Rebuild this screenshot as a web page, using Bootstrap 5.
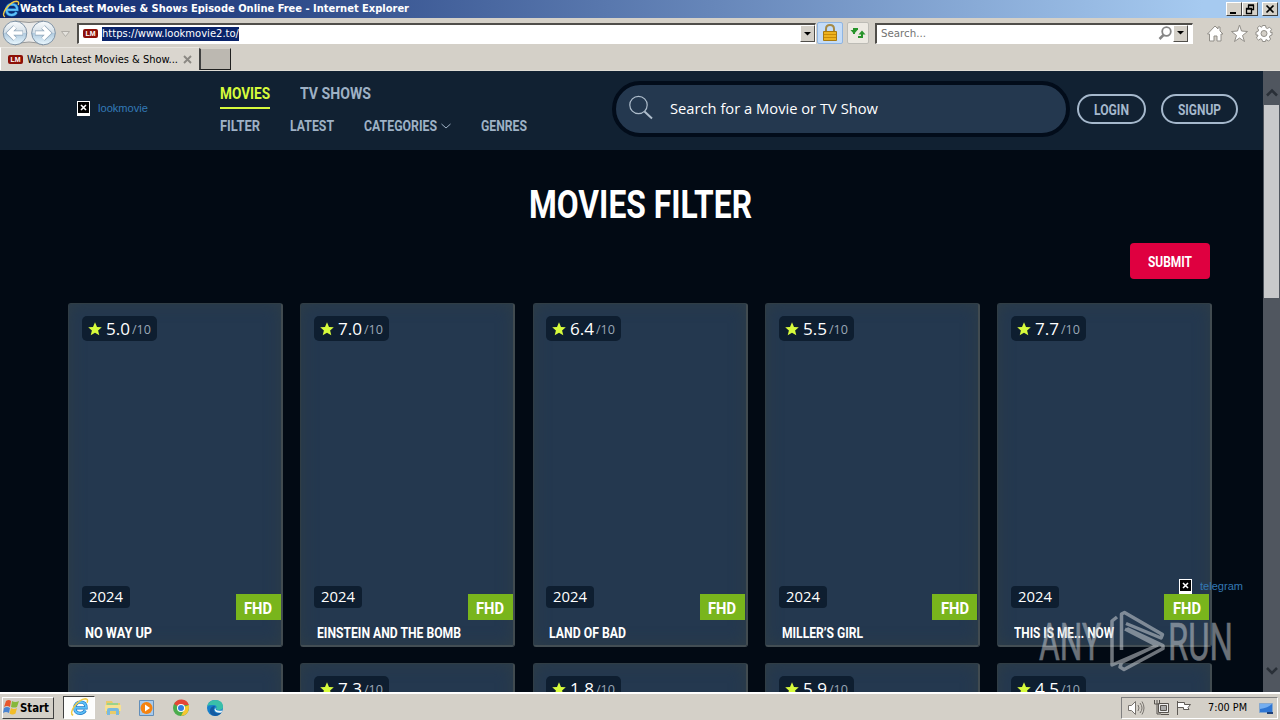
<!DOCTYPE html>
<html lang="en">
<head>
  <meta charset="UTF-8">
  <title>Watch Latest Movies &amp; Shows Episode Online Free</title>
  <link href="https://cdn.jsdelivr.net/npm/bootstrap@5.3.3/dist/css/bootstrap.min.css" rel="stylesheet">
  <style>
    body { width: 1280px; height: 720px; overflow: hidden; background: #d4d0c8; font-family: "DejaVu Sans Condensed", "DejaVu Sans", sans-serif; font-size: 11px; line-height: 14px; color: #000; }
    svg { display: block; flex: none; }
    [data-w] { display: inline-block; white-space: nowrap; flex: none; }
    [data-w] > span { display: inline-block; transform-origin: 0 50%; }

    /* window chrome */
    .titlebar { height: 18px; background: linear-gradient(90deg, #0a246a, #a6caf0 94%); color: #fff; font-weight: bold; padding: 0 2px 0 2px; }
    .win-btn { width: 16px; height: 14px; background: #d4d0c8; border: 1px solid; border-color: #fff #404040 #404040 #fff; }
    .toolbar { height: 29px; padding: 1px 4px 0 2px; }
    .sunken { height: 21px; background: #fff; border: solid; border-width: 2px 1px 1px 2px; border-color: #504e4a #fff #fff #504e4a; }
    .address { width: 739px; }
    .quick-search { width: 318px; margin-left: 6px; color: #737373; }
    .url-sel { background: #0a246a; color: #fff; height: 14px; line-height: 14px; }
    .drop-btn { width: 15px; height: 17px; background: #d4d0c8; border: 1px solid; border-color: #fff #504e4a #504e4a #fff; }
    .tool-btn { width: 22px; height: 22px; border: 1px solid #bdbcb6; border-radius: 2px; background: #ece9e2; margin-left: 4px; }
    .tool-btn.on { width: 26px; background: #c4dcf8; border-color: #8fb5e2; margin-left: 1px; }
    .tabs-row { height: 24px; border-bottom: 1px solid #dedbd4; }
    .ie-tab { width: 199px; height: 23px; background: #dad6cf; border-left: 1px solid #fff; border-top: 1px solid #e8e5df; padding: 1px 0 0 7px; }
    .new-tab { width: 32px; height: 22px; margin-top: 1px; background: #bcb8b1; border: 1px solid; border-width: 1px 1px 1px 2px; border-color: #d4d0c8 #202020 #202020 #404040; }
    .lm-icon { width: 15px; height: 9px; border-radius: 2px; background: #8d1008; color: #fff; font: bold 7px/9px "Liberation Sans", sans-serif; text-align: center; }

    /* page */
    .viewport { height: 621px; background: #020a14; overflow: hidden; }
    .page-body { width: 1263px; overflow: hidden; }
    .site-head { height: 79px; background: #112132; }
    .dosis { font-family: "Liberation Sans Narrow", "Roboto", sans-serif; font-weight: bold; }
    .nunito { font-family: "Open Sans", "Noto Sans", sans-serif; }
    .brand { width: 220px; padding: 0 0 4px 77px; font-family: "Liberation Sans", sans-serif; color: #337ab7; }
    .menu-area { width: 392px; padding-top: 10px; color: #9eb1c5; }
    .menu-main { height: 28px; font-size: 17px; line-height: 24px; }
    .menu-main .current { color: #d7fb3c; border-bottom: 2px solid #d7fb3c; height: 28px; }
    .menu-sub { font-size: 15px; line-height: 20px; margin-top: 7px; }
    .next-item { margin-left: 30px; }
    .site-search { width: 458px; height: 56px; margin-top: 10px; border: 4px solid #020c1a; border-radius: 28px; background: #24384f; color: #fff; font-size: 15px; padding: 0 0 2px 13px; }
    .account { margin: 23px 0 0 7px; gap: 15px; }
    .pill { height: 30px; border: 2px solid #a5b8cc; border-radius: 15px; color: #a5b8cc; font-size: 14px; padding: 2px 15px 0; }
    .page-title { height: 92px; padding: 32px 0 0 529px; color: #fff; font-size: 38px; line-height: 46px; }
    .submit-btn { width: 80px; height: 36px; background: #df0040; color: #fff; border-radius: 4px; font-size: 14px; margin: 1px 53px 0 0; padding-top: 1px; }
    .movies { display: grid; grid-template-columns: repeat(5, 215px); gap: 16px 17.2px; padding: 24px 0 0 68.2px; width: 1263px; }
    .movie { height: 344px; background: #24384f; border: 1px solid #303d45; border-right: 2px solid #414b50; border-bottom: 2px solid #434e54; border-radius: 3px; box-shadow: inset 0 0 16px #2e3d46; color: #fff; padding: 12px 0 0 12.8px; }
    .rate { width: 75px; height: 25px; border-radius: 5px; background: #0e1e30; padding-left: 6px; }
    .rate-num { font-size: 16px; font-weight: 500; }
    .rate-max { font-size: 12px; color: #9ba8b6; margin: 3px 0 0 2px; }
    .year { width: 48px; height: 22px; border-radius: 4px; background: #0e1e30; font-size: 14px; }
    .year-row { margin-top: 245px; height: 34px; }
    .fhd { width: 45px; height: 26px; background: #79b51c; font-size: 17px; align-self: flex-end; margin-right: .7px; padding-top: 1px; }
    .movie-name { font-size: 14px; line-height: 18px; padding: 3.5px 0 0 3px; }
    .scroll-track { width: 17px; background: #50565f; padding: 0 1px; }
    .scroll-thumb { height: 193px; background: #c8c9cb; }
    .x-box { width: 13px; height: 15px; background: #000; border: 1px solid #fff; }
    .after-x { margin-left: 8px; }
    .telegram { left: 1179px; top: 579px; color: #3378b4; font-family: "Liberation Sans", sans-serif; }
    .telegram .after-x, .brand .after-x { margin-top: -2px; }
    .watermark { left: 1036px; top: 606px; }

    /* taskbar */
    .taskbar { height: 28px; background: #d4d0c8; border-top: 2px solid #fff; padding: 1px 2px 0 2px; }
    .start-btn { width: 52px; height: 22px; border: 1px solid; border-color: #fff #404040 #404040 #fff; font-weight: bold; font-size: 12px; }
    .task-on { width: 32px; height: 23px; background: #fdfdfc; border: 1px solid; border-color: #404040 #fff #fff #404040; margin-left: 9px; }
    .launchers { gap: 16px; margin-left: 9px; }
    .tray { width: 157px; height: 22px; border: 1px solid; border-color: #808080 #fff #fff #808080; padding-left: 5px; }
    .clock { margin: 0 11px 0 15px; }
  </style>
  <script src="https://cdn.jsdelivr.net/npm/bootstrap@5.3.3/dist/js/bootstrap.bundle.min.js"></script>
</head>
<body>
  <svg width="0" height="0" class="position-absolute">
    <symbol id="ie" viewBox="0 0 18 18">
      <path d="M4.500 9.800h10.700Q15.200 4.300 10 4.300 5 4.500 4.500 9.800 4.500 15 9.700 15 12.800 15 14.500 12.200" fill="none" stroke="#1b78c8" stroke-width="3"/>
      <path d="M4.500 9.800h10.700Q15.200 4.300 10 4.300 5 4.500 4.500 9.800 4.500 15 9.700 15 12.800 15 14.500 12.200" fill="none" stroke="#5fc0f6" stroke-width="1.800"/>
      <path d="M3 16.800Q-.5 15.500 4 8.500 9.500 1.500 14.500 1.200 17.600 1.300 16.200 5" fill="none" stroke="#f0c943" stroke-width="1.400"/>
    </symbol>
    <symbol id="xmark" viewBox="0 0 11 13"><path d="M0 0h11v11H0z" fill="#000"/><path d="M0 11h11v2H0z" fill="#fff"/><path d="M3 3l5 5M8 3L3 8" stroke="#fff" stroke-width="1.600"/></symbol>
    <symbol id="star" viewBox="0 0 14 14"><path d="M7 .3L9 5l4.800.3-3.700 3.200L11.300 13.300 7 10.700 2.700 13.300 3.900 8.500.2 5.300 5 5z"/></symbol>
  </svg>

  <div class="titlebar d-flex align-items-center">
    <svg width="18" height="18"><use href="#ie"/></svg>
    <span data-w="389">Watch Latest Movies &amp; Shows Episode Online Free - Internet Explorer</span>
    <div class="d-flex ms-auto">
      <div class="win-btn"><svg width="14" height="12"><path d="M3 9h6v2H3z"/></svg></div>
      <div class="win-btn"><svg width="14" height="12"><path d="M5.500 5V2.500h5v4H8M5 2h6M3.500 5.500h5v5h-5zM3 6h6" fill="none" stroke="#000" stroke-width="1.300"/></svg></div>
      <div class="win-btn ms-1"><svg width="14" height="12"><path d="M3.500 2.500l7 7M10.500 2.500l-7 7" stroke="#000" stroke-width="1.700"/></svg></div>
    </div>
  </div>

  <div class="toolbar d-flex align-items-center">
    <svg width="75" height="28" viewBox="0 0 75 28">
      <defs><linearGradient id="orb" x2="0" y2="1"><stop stop-color="#fafcfd"/><stop offset=".48" stop-color="#d4dfe8"/><stop offset=".52" stop-color="#b1cbdf"/><stop offset="1" stop-color="#eaf8ff"/></linearGradient></defs>
      <path d="M13 2Q27 5 41 2V26Q27 20 13 26z" fill="#e9e9e8" stroke="#999"/>
      <circle cx="13" cy="14" r="11.800" fill="url(#orb)" stroke="#7f93a6"/><circle cx="41.500" cy="14" r="11.800" fill="url(#orb)" stroke="#7f93a6"/>
      <g fill="none" stroke="#8fa5b9" stroke-width="5"><path d="M21 14H7M13 8l-6 6 6 6M33 14h14M41 8l6 6-6 6"/></g>
      <g fill="none" stroke="#fff" stroke-width="3.600"><path d="M20.500 14H7M13 8l-6 6 6 6M33.500 14h14M41 8l6 6-6 6"/></g>
      <path d="M59.500 12.500h8l-4 5z" fill="#e4e2dd" stroke="#b0ada7"/>
    </svg>
    <div class="sunken address d-flex align-items-center">
      <div class="lm-icon ms-1">LM</div><span data-w="137" class="url-sel ms-1 me-auto">https://www.lookmovie2.to/</span>
      <div class="drop-btn"><svg width="13" height="15"><path d="M3 6h7L6.500 9.500z"/></svg></div>
    </div>
    <div class="tool-btn on"><svg width="24" height="20"><path d="M8 9V6q0-4 4-4t4 4v3" fill="none" stroke="#a58a47" stroke-width="2"/><path d="M5.500 8.500h13v9h-13z" fill="#edb320" stroke="#a77a12"/><path d="M6 11.500h12M6 14.500h12" stroke="#ca8c08"/></svg></div>
    <div class="tool-btn"><svg width="20" height="20"><path d="M6 11V6h4M14 9v5h-4" fill="none" stroke="#27942b" stroke-width="2"/><path d="M2.500 7h7L6 11zM10.500 11.500h7L14 7.500z" fill="#27942b"/></svg></div>
    <div class="sunken quick-search d-flex align-items-center">
      <span data-w="45" class="ms-1">Search...</span>
      <svg class="ms-auto" width="16" height="17"><circle cx="9.500" cy="6.500" r="4.300" fill="none" stroke="#858585" stroke-width="1.800"/><path d="M6.500 10l-4 4" stroke="#858585" stroke-width="2.500"/></svg>
      <div class="drop-btn me-1"><svg width="13" height="15"><path d="M3 5h7L6.500 8.500z"/></svg></div>
    </div>
    <svg class="ms-auto" width="70" height="22" viewBox="0 0 70 22" fill="#fff" stroke="#918e88">
      <path d="M1.500 12l7.500-8 3 3V5h2v4l3 3h-2v7h-4v-5H8v5H3.500v-7z"/>
      <path d="M33.500 3l2 6 6 .5-5 4 2 6-5-3.500-5 3.500 2-6-5-4 6-.5z"/>
      <g transform="translate(58 11.500)"><path d="M-1.500-8h3l.5 2.300 1.500.7 2-1.300 2.100 2.100-1.300 2 .6 1.600L8-1.500v3l-1.900.5-.7 1.500 1.300 2-2.100 2.100-2-1.300L2 6l-.5 2h-3L-2 6l-1.500-.7-2 1.300-2.100-2.100 1.300-2L-6 1.600-8 1.500v-3l1.900-.5.700-1.500-1.300-2 2.100-2.100 2 1.300.6-.4z"/><circle r="3" fill="#d4d0c8"/></g>
    </svg>
  </div>

  <div class="tabs-row d-flex">
    <div class="ie-tab d-flex align-items-center">
      <div class="lm-icon me-1">LM</div><span data-w="151">Watch Latest Movies &amp; Show...</span>
      <svg class="ms-1" width="10" height="10"><path d="M2 1l7 7M9 1L2 8" stroke="#8b8883" stroke-width="1.900"/></svg>
    </div>
    <div class="new-tab"></div>
  </div>

  <main class="viewport d-flex">
    <div class="page-body">
      <header class="site-head d-flex">
        <div class="brand d-flex align-items-center"><div class="x-box"><svg width="11" height="13"><use href="#xmark"/></svg></div><span class="after-x" data-w="50">lookmovie</span></div>
        <nav class="menu-area dosis">
          <div class="menu-main d-flex"><span class="current" data-w="50">MOVIES</span><span class="next-item" data-w="71">TV SHOWS</span></div>
          <div class="menu-sub d-flex align-items-center">
            <span data-w="40">FILTER</span><span class="next-item" data-w="44">LATEST</span><span class="next-item" data-w="73">CATEGORIES</span>
            <svg width="14" height="10"><path d="M4.500 3l4.500 4 4.500-4" fill="none" stroke="#9eb1c5"/></svg><span class="next-item" data-w="46">GENRES</span>
          </div>
        </nav>
        <div class="site-search nunito d-flex align-items-center">
          <svg width="25" height="26" viewBox="0 0 25 26" fill="none" stroke="#aebdcc"><circle cx="9.500" cy="10" r="8.700" stroke-width="1.200"/><path d="M15.500 16.500l7.500 7" stroke-width="2"/></svg>
          <span class="ms-3" data-w="208">Search for a Movie or TV Show</span>
        </div>
        <div class="account dosis d-flex align-items-start">
          <div class="pill d-flex align-items-center"><span data-w="35">LOGIN</span></div>
          <div class="pill d-flex align-items-center"><span data-w="43">SIGNUP</span></div>
        </div>
      </header>
      <div class="page-title dosis"><span data-w="223">MOVIES FILTER</span></div>
      <div class="d-flex justify-content-end"><div class="submit-btn dosis d-flex align-items-center justify-content-center"><span data-w="44">SUBMIT</span></div></div>
      <div class="movies" id="movies"></div>
    </div>
    <div class="scroll-track ms-auto d-flex flex-column">
      <svg width="15" height="34"><path d="M3 24.500l5-5 5 5" fill="none" stroke="#292f37" stroke-width="2.500"/></svg>
      <div class="scroll-thumb"></div>
      <svg class="mt-auto" width="15" height="30"><path d="M3 6l5 5 5-5" fill="none" stroke="#292f37" stroke-width="2.500"/></svg>
    </div>
  </main>

  <footer class="taskbar d-flex align-items-center">
    <div class="start-btn d-flex align-items-center">
      <svg width="16" height="17"><path d="M3 2q3-2 5 0L7 8Q4 6 1 8z" fill="#e8572c"/><path d="M9 2q3 2 7 0l-2 6q-3 1-6 0z" fill="#86b83c"/><path d="M1 9q3-2 6 0l-1 5q-3-2-6 0z" fill="#4a83d0"/><path d="M8 9q3 2 6 0l-1.500 5.500q-3 2-6 0z" fill="#f3bd28"/></svg>
      <span data-w="29" class="ms-auto me-1">Start</span>
    </div>
    <div class="task-on d-flex justify-content-center"><svg width="19" height="20"><use href="#ie"/></svg></div>
    <div class="launchers d-flex">
      <svg width="18" height="20"><path d="M2 3h6l1 2h7v11H2z" fill="#e9cb68"/><path d="M3 5h11v3H3z" fill="#9ad28c"/><path d="M1 7h16v6H1z" fill="#f6e193"/><path d="M3 17v-5q0-2 2-2h8q2 0 2 2v5h-3v-4H6v4z" fill="#79b9df"/></svg>
      <svg width="18" height="20"><path d="M1.500 2.500h14v15h-14z" fill="#a8caec" stroke="#628eb9"/><circle cx="8.500" cy="10" r="6" fill="#f58310"/><path d="M7 6.500l5 3.500-5 3.500z" fill="#fff"/></svg>
      <svg width="18" height="20" viewBox="0 0 18 20"><circle cx="9" cy="10" r="8" fill="#4bac4d"/><path d="M9 10L2.100 6A8 8 0 0 1 16.900 7H9z" fill="#e54436"/><path d="M9 10l8-3Q18 17 9 18l3-6z" fill="#f7c62f"/><circle cx="9" cy="10" r="4" fill="#fff"/><circle cx="9" cy="10" r="3" fill="#317de0"/></svg>
      <svg width="18" height="20" viewBox="0 0 18 20"><circle cx="9" cy="10" r="8" fill="#167fcb"/><path d="M1.200 8Q3 2 9 2q8 0 8 7 0 3-4 3-2 0-3-1 2-4-3-4-4 0-5.800 1" fill="#39bfa9"/><path d="M9 8q-3 5 1 7 3 1 6-1-3 4-7 4-6-1-5-6 1-4 5-4" fill="#135aa2"/><path d="M9.500 9.500q-1 4 7 3l-1 2q-6 1-7-3z" fill="#e9f4f8"/></svg>
    </div>
    <div class="tray ms-auto d-flex align-items-center">
      <svg width="18" height="18" fill="#fff" stroke="#77736e"><path d="M1.500 6.500h3l4-4v13l-4-4h-3z"/><path d="M11 6q2 3 0 6M13 4q4 5 0 10M15 2.500q4 6.500 0 13" fill="none"/></svg>
      <svg class="ms-2" width="18" height="18" fill="#eee" stroke="#57534e"><path d="M5.500 4.500h10v9h-10zM8 15.500h8"/><path d="M1.500 1v4h5V1M4 1v4M4 5v10h4" fill="none"/><path d="M7.500 6.500h6v5h-6z" fill="#aaa"/></svg>
      <svg class="ms-1" width="18" height="18" fill="#fff" stroke="#5f5b56"><path d="M2.500 2v14M2.500 3.500h7v2h6l-2.500 3 1 2H8.500v-2h-6z"/></svg>
      <span class="clock" data-w="39">7:00 PM</span>
      <svg width="17" height="18"><path d="M1.500 4.500h13v9h-13z" fill="#2f76d3" stroke="#86a8cf"/><path d="M2 5h12q-4 4-12 5z" fill="#75aeef"/><path d="M9 13h6v2H9z" fill="#1d4078"/></svg>
    </div>
  </footer>

  <div class="telegram position-absolute d-flex align-items-center"><div class="x-box"><svg width="11" height="13"><use href="#xmark"/></svg></div><span class="after-x" data-w="43">telegram</span></div>
  <svg class="watermark position-absolute" width="200" height="70" viewBox="1036 606 200 70" opacity=".52">
    <g fill="#c9ced3" stroke="#c9ced3" stroke-width=".6" font-family="Roboto, sans-serif" font-size="52">
      <text x="1039" y="659.500" textLength="62" lengthAdjust="spacingAndGlyphs">ANY</text>
      <text x="1168" y="659.500" textLength="65" lengthAdjust="spacingAndGlyphs">RUN</text>
    </g>
    <path d="M1117 617l-5 4v44l45-19.500-32-16.500M1121.500 650v-36l3-1.500 38 22-1.500 3.500-35-14.500M1127 628.500l36 17v3l-39 21-4-2.500 1.500-4.500 35-17" fill="none" stroke="#d2d6da" stroke-width="3.500" stroke-linejoin="round"/>
  </svg>

  <script>
    const movies = [
      ['5.0', 'NO WAY UP', 67], ['7.0', 'EINSTEIN AND THE BOMB', 144], ['6.4', 'LAND OF BAD', 77],
      ['5.5', 'MILLER’S GIRL', 81], ['7.7', 'THIS IS ME... NOW', 100],
      [null], ['7.3'], ['1.8'], ['5.9'], ['4.5']
    ];

    document.getElementById('movies').innerHTML = movies.map(([rate, name, width]) => `
      <div class="movie">
        ${rate ? `<div class="rate nunito d-flex align-items-center">
          <svg width="14" height="14" fill="#d7fb3c"><use href="#star"/></svg>
          <span class="rate-num ms-1" data-w="24">${rate}</span><span class="rate-max" data-w="19">/10</span>
        </div>` : ''}
        ${name ? `<div class="year-row d-flex justify-content-between">
          <div class="year nunito d-flex align-items-center justify-content-center"><span data-w="34">2024</span></div>
          <div class="fhd dosis d-flex align-items-center justify-content-center"><span data-w="28">FHD</span></div>
        </div>
        <div class="movie-name dosis"><span data-w="${width}">${name}</span></div>` : ''}
      </div>`).join('');

    // Squeeze each label to the width given in data-w
    document.querySelectorAll('[data-w]').forEach(el => {
      const inner = document.createElement('span');
      inner.append(...el.childNodes);
      el.append(inner);
      const natural = inner.getBoundingClientRect().width;
      el.style.width = el.dataset.w + 'px';
      inner.style.transform = `scaleX(${el.dataset.w / natural})`;
    });
  </script>
</body>
</html>
